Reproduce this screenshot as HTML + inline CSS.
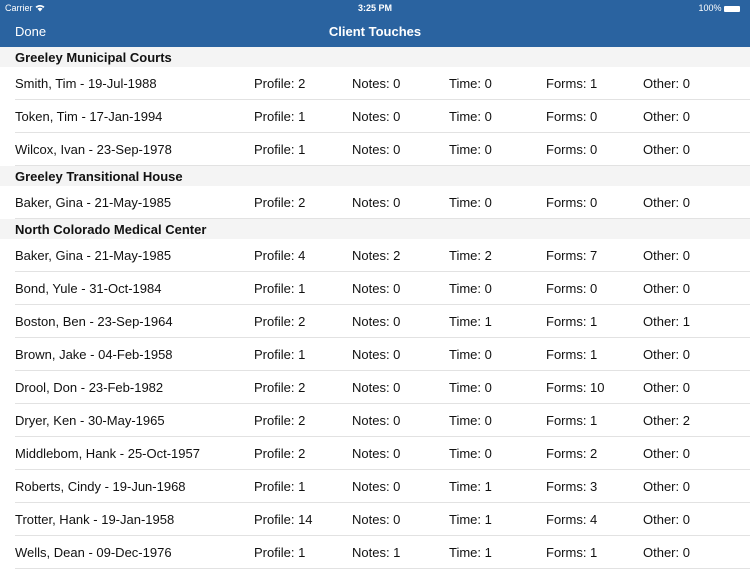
<!DOCTYPE html><html><head><style>
body{margin:0;width:750px;height:563px;overflow:hidden;background:#fff;font-family:"Liberation Sans",sans-serif;color:#111;position:relative}
.nav{position:absolute;left:0;top:0;width:750px;height:47px;background:#2a63a0;color:#fff}
.sb{position:absolute;top:3px;font-size:9px}
.sec{position:absolute;left:0;width:750px;height:20px;background:#f4f4f4;font-size:13px;font-weight:bold;line-height:21px}
.sec span{position:absolute;left:15px;top:0}
.row{position:absolute;left:0;width:750px;height:33px;font-size:13px;line-height:33px}
.row span{position:absolute;top:0}
.row:after{content:"";position:absolute;left:15px;right:0;bottom:0;height:1px;background:#e2e2e2}
</style></head><body>
<div class="nav">
<div class="sb" style="left:5px">Carrier <svg width="10" height="8" viewBox="0 0 10 8" style="vertical-align:-1px"><path d="M0.5 2.8A6.5 6.5 0 0 1 9.5 2.8L8.3 4A4.8 4.8 0 0 0 1.7 4Z M2.5 4.8A3.6 3.6 0 0 1 7.5 4.8L5 7.5Z" fill="#fff"/></svg></div>
<div class="sb" style="left:0;width:750px;text-align:center;font-weight:bold">3:25 PM</div>
<div class="sb" style="right:10px">100% <span style="display:inline-block;width:16px;height:6px;background:#fff;vertical-align:-1px;border-radius:1px"></span></div>
<div style="position:absolute;left:15px;top:24px;font-size:13px">Done</div>
<div style="position:absolute;left:0;width:750px;top:24px;font-size:13px;font-weight:bold;text-align:center">Client Touches</div>
</div>
<div id="c"></div>
<script>
var d=[["S","Greeley Municipal Courts"],["Smith, Tim - 19-Jul-1988",2,0,0,1,0],["Token, Tim - 17-Jan-1994",1,0,0,0,0],["Wilcox, Ivan - 23-Sep-1978",1,0,0,0,0],["S","Greeley Transitional House"],["Baker, Gina - 21-May-1985",2,0,0,0,0],["S","North Colorado Medical Center"],["Baker, Gina - 21-May-1985",4,2,2,7,0],["Bond, Yule - 31-Oct-1984",1,0,0,0,0],["Boston, Ben - 23-Sep-1964",2,0,1,1,1],["Brown, Jake - 04-Feb-1958",1,0,0,1,0],["Drool, Don - 23-Feb-1982",2,0,0,10,0],["Dryer, Ken - 30-May-1965",2,0,0,1,2],["Middlebom, Hank - 25-Oct-1957",2,0,0,2,0],["Roberts, Cindy - 19-Jun-1968",1,0,1,3,0],["Trotter, Hank - 19-Jan-1958",14,0,1,4,0],["Wells, Dean - 09-Dec-1976",1,1,1,1,0]];
var y=47,h="",L=["Profile","Notes","Time","Forms","Other"],X=[254,352,449,546,643];
d.forEach(function(r){if(r[0]=="S"){h+='<div class="sec" style="top:'+y+'px"><span>'+r[1]+'</span></div>';y+=20}else{h+='<div class="row" style="top:'+y+'px"><span style="left:15px">'+r[0]+'</span>';for(var i=0;i<5;i++)h+='<span style="left:'+X[i]+'px">'+L[i]+': '+r[i+1]+'</span>';h+='</div>';y+=33}});
document.getElementById("c").innerHTML=h;
</script>
</body></html>
